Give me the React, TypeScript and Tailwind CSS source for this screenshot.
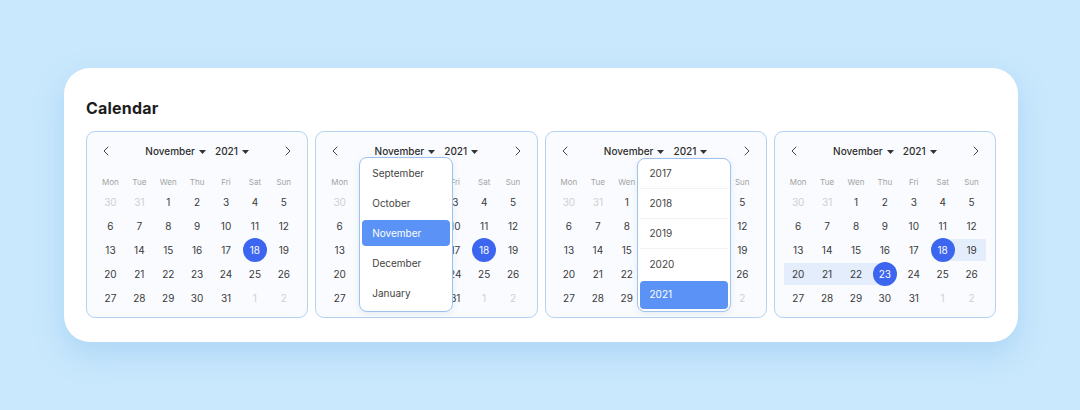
import { ChevronLeft, ChevronRight } from "lucide-react";

type Variant = "plain" | "month" | "year" | "range";

type Day = { n: number; out?: boolean };

const dayNames = ["Mon", "Tue", "Wen", "Thu", "Fri", "Sat", "Sun"];

const weeks: Day[][] = [
  [{ n: 30, out: true }, { n: 31, out: true }, { n: 1 }, { n: 2 }, { n: 3 }, { n: 4 }, { n: 5 }],
  [{ n: 6 }, { n: 7 }, { n: 8 }, { n: 9 }, { n: 10 }, { n: 11 }, { n: 12 }],
  [{ n: 13 }, { n: 14 }, { n: 15 }, { n: 16 }, { n: 17 }, { n: 18 }, { n: 19 }],
  [{ n: 20 }, { n: 21 }, { n: 22 }, { n: 23 }, { n: 24 }, { n: 25 }, { n: 26 }],
  [{ n: 27 }, { n: 28 }, { n: 29 }, { n: 30 }, { n: 31 }, { n: 1, out: true }, { n: 2, out: true }],
];

const months = ["September", "October", "November", "December", "January"];
const years = ["2017", "2018", "2019", "2020", "2021"];

// columns fully hidden behind an open dropdown
const hiddenCols: Record<Variant, number[]> = {
  plain: [],
  month: [1, 2, 3],
  year: [3, 4, 5],
  range: [],
};

function Caret() {
  return (
    <svg width="7" height="4" viewBox="0 0 7 4" className="ml-[4px] mt-[1px]">
      <path d="M0 0h7L3.5 4z" fill="#333" />
    </svg>
  );
}

function bandClass(day: Day, variant: Variant) {
  if (variant !== "range" || day.out) return "";
  if (day.n === 18) return "bg-[linear-gradient(to_right,transparent_50%,#e3edfc_50%)]";
  if (day.n === 23) return "bg-[linear-gradient(to_right,#e3edfc_50%,transparent_50%)]";
  if (day.n > 18 && day.n < 23) return "bg-[#e3edfc]";
  return "";
}

function Cell({ day, variant, hidden }: { day: Day; variant: Variant; hidden: boolean }) {
  const selected = !day.out && (day.n === 18 || (variant === "range" && day.n === 23));
  return (
    <div className={`h-[24px] flex items-center ${hidden ? "invisible" : ""}`}>
      <div className={`h-[22px] w-full flex items-center justify-center ${bandClass(day, variant)}`}>
        {selected ? (
          <div className="w-[24px] h-[24px] shrink-0 rounded-full bg-[#3c66ef] text-white flex items-center justify-center">
            {day.n}
          </div>
        ) : (
          <span className={day.out ? "text-[#d0d0d0]" : "text-[#3a3a3a]"}>{day.n}</span>
        )}
      </div>
    </div>
  );
}

function MonthMenu() {
  return (
    <div className="absolute left-[43px] top-[25px] w-[94px] h-[155px] rounded-[8px] border border-[#9fc2ec] bg-white px-[2px] shadow-[0_2px_6px_rgba(80,130,200,0.12)]">
      {months.map((m) => (
        <div key={m} className="h-[30px] flex items-center">
          <div
            className={`h-[26px] w-full flex items-center pl-[10px] rounded-[4px] text-[10px] ${
              m === "November" ? "bg-[#5a92f6] text-white" : "text-[#444]"
            }`}
          >
            {m}
          </div>
        </div>
      ))}
    </div>
  );
}

function YearMenu() {
  return (
    <div className="absolute left-[91px] top-[26px] w-[94px] h-[154px] rounded-[8px] border border-[#9fc2ec] bg-white px-[2px] shadow-[0_2px_6px_rgba(80,130,200,0.12)]">
      {years.map((y, i) => (
        <div
          key={y}
          className={`flex items-center ${i < 4 ? "h-[30px]" : "h-[31px]"} ${
            i < 3 ? "border-b border-[#f0f2f5]" : ""
          }`}
        >
          <div
            className={`w-full flex items-center pl-[10px] rounded-[4px] text-[10px] ${
              y === "2021" ? "h-[28px] bg-[#5a92f6] text-white" : "h-[26px] text-[#444]"
            }`}
          >
            {y}
          </div>
        </div>
      ))}
    </div>
  );
}

function Calendar({ variant }: { variant: Variant }) {
  const hidden = hiddenCols[variant];
  return (
    <div className="relative h-[187px] rounded-[9px] border border-[#b5d3f1] bg-[#f9fbfe] px-[9px] pt-[9px]">
      <div className="h-[20px] flex items-center justify-between px-[2px] text-[#444]">
        <ChevronLeft size={16} strokeWidth={1.5} />
        <div className="flex items-center text-[10px] font-medium text-[#2e2e2e]">
          <span className="flex items-center">
            November
            <Caret />
          </span>
          <span className="flex items-center ml-[9px]">
            2021
            <Caret />
          </span>
        </div>
        <ChevronRight size={16} strokeWidth={1.5} />
      </div>
      <div className="grid grid-cols-7 mt-[13px] h-[16px] items-center text-[8px] text-[#a3a3a3]">
        {dayNames.map((d, i) => (
          <div key={d} className={`text-center ${hidden.includes(i) ? "invisible" : ""}`}>
            {d}
          </div>
        ))}
      </div>
      <div className="grid grid-cols-7 text-[10px]">
        {weeks.flat().map((day, i) => (
          <Cell key={i} day={day} variant={variant} hidden={hidden.includes(i % 7)} />
        ))}
      </div>
      {variant === "month" && <MonthMenu />}
      {variant === "year" && <YearMenu />}
    </div>
  );
}

export default function App() {
  return (
    <div
      className="w-[1080px] h-[410px] bg-[#c9e8fd] pt-[68px] pl-[64px]"
      style={{ fontFamily: "Inter, 'Noto Sans', sans-serif" }}
    >
      <div className="w-[954px] h-[274px] rounded-[26px] bg-white px-[22px] pt-[30px] shadow-[0_12px_30px_rgba(90,160,225,0.25)]">
        <h1 className="h-[20px] flex items-center text-[16px] font-bold text-[#1d1d1d] tracking-[0.2px]">
          Calendar
        </h1>
        <div className="grid grid-cols-4 gap-[7px] mt-[13px]">
          <Calendar variant="plain" />
          <Calendar variant="month" />
          <Calendar variant="year" />
          <Calendar variant="range" />
        </div>
      </div>
    </div>
  );
}
